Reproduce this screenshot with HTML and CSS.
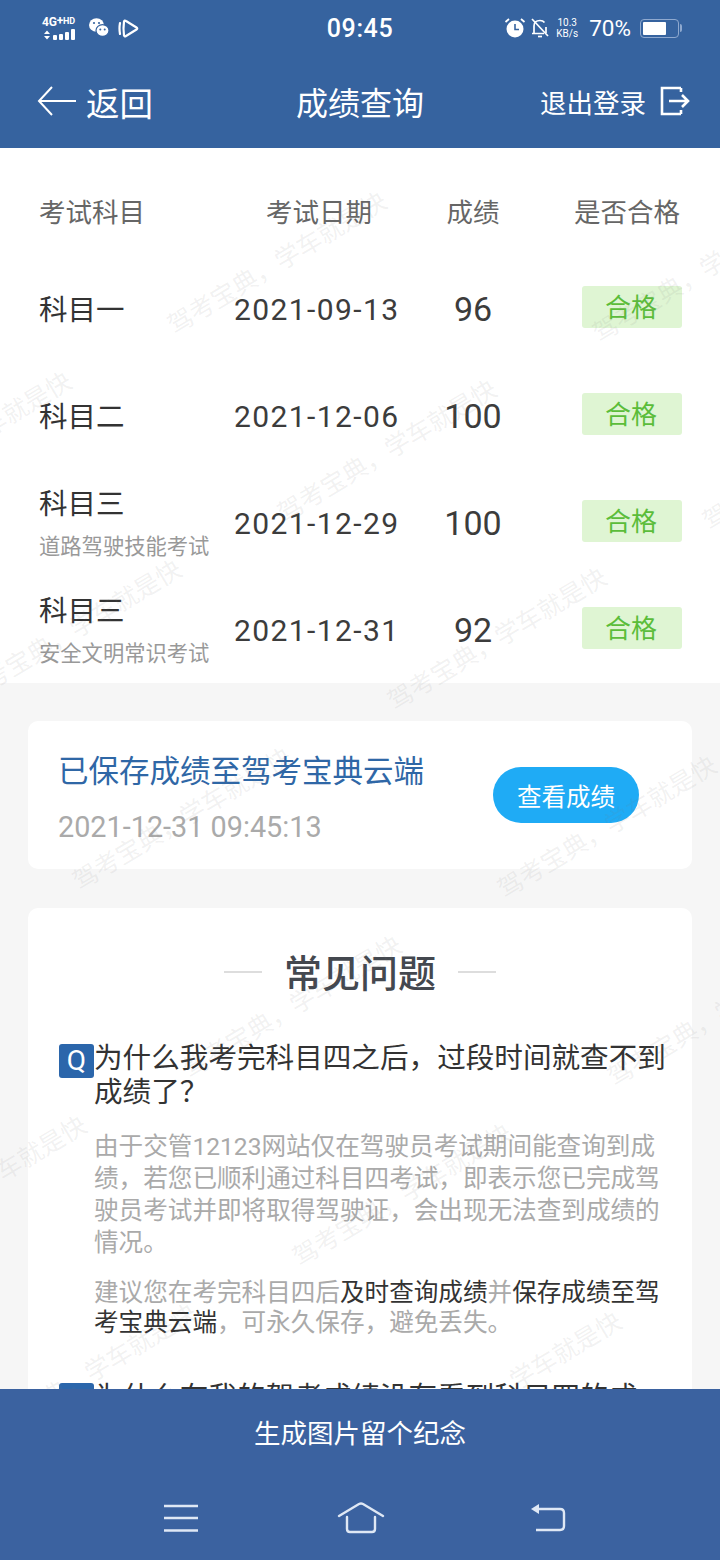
FILE: index.html
```html
<!DOCTYPE html>
<html lang="zh-CN">
<head>
    <meta charset="UTF-8">
    <meta name="viewport" content="width=device-width, initial-scale=1.0">
    <title>成绩查询</title>
    <link rel="stylesheet" href="styles.css">
</head>
<body>
    <header class="top">
        <div class="status">
            <div class="status-left">
                <div class="signal">
                    <span class="signal-text">4G<sup>+</sup><em>HD</em></span>
                    <svg width="38" height="12" viewBox="0 0 38 12">
                        <path d="M2 5 L5 1.500 L8 5 Z M2 7 L5 10.500 L8 7 Z" fill="#fff"/>
                        <rect x="11" y="6" width="4" height="5" rx="1" fill="#fff"/>
                        <rect x="17" y="5" width="4" height="6" rx="1" fill="#fff"/>
                        <rect x="23" y="3" width="4" height="8" rx="1" fill="#fff"/>
                        <rect x="29" y="0" width="4" height="11" rx="1" fill="#fff"/>
                    </svg>
                </div>
                <svg class="wechat" width="22" height="22" viewBox="0 0 22 22">
                    <ellipse cx="8.500" cy="8" rx="7.500" ry="6.800" fill="#fff"/>
                    <ellipse cx="14.500" cy="13.500" rx="6.500" ry="5.800" fill="#fff" stroke="#36639f" stroke-width="1.200"/>
                    <circle cx="6" cy="6" r="1.100" fill="#36639f"/>
                    <circle cx="11" cy="6" r="1.100" fill="#36639f"/>
                    <circle cx="12.300" cy="12.500" r="1" fill="#36639f"/>
                    <circle cx="16.700" cy="12.500" r="1" fill="#36639f"/>
                </svg>
                <svg class="play" width="21" height="21" viewBox="0 0 21 21" fill="none" stroke="#fff" stroke-width="2.200" stroke-linejoin="round" stroke-linecap="round">
                    <path d="M2 5 Q1 10.500 2 16"/>
                    <path d="M6 3.500 Q6.500 2 8 3 L18.500 9.500 Q20 10.500 18.500 11.500 L8 18 Q6.500 19 6 17.500 Q5 10.500 6 3.500 Z"/>
                </svg>
            </div>
            <div class="time">09:45</div>
            <div class="status-right">
                <svg width="22" height="22" viewBox="0 0 22 22">
                    <circle cx="11" cy="12" r="8.500" fill="#fff"/>
                    <path d="M11 7 V12.500 H15" fill="none" stroke="#36639f" stroke-width="1.600"/>
                    <path d="M1.500 5 L5 2 M20.500 5 L17 2" stroke="#fff" stroke-width="1.800"/>
                </svg>
                <svg width="20" height="22" viewBox="0 0 20 22" fill="none" stroke="#fff" stroke-width="1.700">
                    <path d="M4 16 V9 Q4 3.500 10 3.500 Q13 3.500 14.500 5.500 M16 10 V16 M2 16.500 H14"/>
                    <path d="M2 2 L18 19"/>
                    <path d="M8 19.500 H12"/>
                </svg>
                <div class="speed">10.3<br>KB/s</div>
                <span class="battery-text">70%</span>
                <div class="battery"><div class="battery-fill"></div></div>
            </div>
        </div>
        <nav class="nav">
            <a class="back">
                <svg width="40" height="32" viewBox="0 0 40 32" fill="none" stroke="#fff" stroke-width="2">
                    <path d="M39 16 H2 M15 2 L2 16 L15 30"/>
                </svg>
                <span>返回</span>
            </a>
            <h1>成绩查询</h1>
            <a class="logout">
                <span>退出登录</span>
                <svg width="32" height="30" viewBox="0 0 32 30" fill="none" stroke="#fff" stroke-width="2.600">
                    <path d="M22 2 H3 V28 H22 M22 28 V24 M22 2 V6"/>
                    <path d="M10 15 H29 M23 9 L29 15 L23 21"/>
                </svg>
            </a>
        </nav>
    </header>

    <main class="content">
        <section class="scores">
            <div class="row head">
                <div>考试科目</div>
                <div class="center">考试日期</div>
                <div class="center">成绩</div>
                <div class="right">是否合格</div>
            </div>
            <div class="row">
                <div class="subject">科目一</div>
                <div class="date">2021-09-13</div>
                <div class="score">96</div>
                <div class="right"><span class="pass">合格</span></div>
            </div>
            <div class="row">
                <div class="subject">科目二</div>
                <div class="date">2021-12-06</div>
                <div class="score">100</div>
                <div class="right"><span class="pass">合格</span></div>
            </div>
            <div class="row">
                <div class="subject">科目三<small>道路驾驶技能考试</small></div>
                <div class="date">2021-12-29</div>
                <div class="score">100</div>
                <div class="right"><span class="pass">合格</span></div>
            </div>
            <div class="row">
                <div class="subject">科目三<small>安全文明常识考试</small></div>
                <div class="date">2021-12-31</div>
                <div class="score">92</div>
                <div class="right"><span class="pass">合格</span></div>
            </div>
        </section>

        <section class="card saved">
            <div>
                <h2>已保存成绩至驾考宝典云端</h2>
                <p>2021-12-31 09:45:13</p>
            </div>
            <button class="view-btn">查看成绩</button>
        </section>

        <section class="card faq">
            <div class="faq-title"><i></i><h2>常见问题</h2><i></i></div>
            <div class="question">
                <span class="q-mark">Q</span>
                <h3>为什么我考完科目四之后，过段时间就查不到<br>成绩了？</h3>
            </div>
            <p class="answer">由于交管12123网站仅在驾驶员考试期间能查询到成<br>绩，若您已顺利通过科目四考试，即表示您已完成驾<br>驶员考试并即将取得驾驶证，会出现无法查到成绩的<br>情况。</p>
            <p class="answer second">建议您在考完科目四后<b>及时查询成绩</b>并<b>保存成绩至驾<br>考宝典云端</b>，可永久保存，避免丢失。</p>
            <div class="question next">
                <span class="q-mark">Q</span>
                <h3>为什么在我的驾考成绩没有看到科目四的成<br>绩？</h3>
            </div>
        </section>

        <div class="watermarks">
            <span>驾考宝典，学车就是快</span>
            <span>驾考宝典，学车就是快</span>
            <span>驾考宝典，学车就是快</span>
            <span>驾考宝典，学车就是快</span>
            <span>驾考宝典，学车就是快</span>
            <span>驾考宝典，学车就是快</span>
            <span>驾考宝典，学车就是快</span>
            <span>驾考宝典，学车就是快</span>
            <span>驾考宝典，学车就是快</span>
            <span>驾考宝典，学车就是快</span>
            <span>驾考宝典，学车就是快</span>
            <span>驾考宝典，学车就是快</span>
            <span>驾考宝典，学车就是快</span>
            <span>驾考宝典，学车就是快</span>
            <span>驾考宝典，学车就是快</span>
        </div>
    </main>

    <footer class="bottom">
        <div class="make-img">生成图片留个纪念</div>
        <div class="sys-nav">
            <svg width="36" height="28" viewBox="0 0 36 28" fill="none" stroke="#dfe8f5" stroke-width="2.400">
                <path d="M1 2 H35 M1 14 H35 M1 26.500 H35"/>
            </svg>
            <svg class="home" width="48" height="32" viewBox="0 0 48 32" fill="none" stroke="#dfe8f5" stroke-width="2.400" stroke-linecap="round" stroke-linejoin="round">
                <path d="M2 14 L22 2 Q24 1 26 2 L46 14"/>
                <path d="M10 15 V27 Q10 30 13 30 H35 Q38 30 38 27 V15"/>
            </svg>
            <svg width="36" height="28" viewBox="0 0 36 28" fill="none" stroke="#dfe8f5" stroke-width="2.400">
                <path d="M6 5 H30 Q34 5 34 9 V22 Q34 26 30 26 H6"/>
                <path d="M9 0 V10 L1 5 Z" fill="#dfe8f5" stroke="none"/>
            </svg>
        </div>
    </footer>
</body>
</html>
```

FILE: styles.css
```css
* {
    box-sizing: border-box;
}
body {
    font-family: Roboto, "Noto Sans CJK SC", sans-serif;
    background-color: #f6f6f6;
    color: #333;
    margin: 0;
    padding: 0;
    width: 720px;
    height: 1560px;
    display: flex;
    flex-direction: column;
    overflow: hidden;
}
h1, h2, h3, p {
    margin: 0;
    font-weight: 400;
}

/* top bar */
.top {
    background-color: #36639f;
    color: #fff;
    height: 148px;
    flex: none;
}
.status {
    height: 56px;
    padding: 0 40px 0 42px;
    display: grid;
    grid-template-columns: 1fr auto 1fr;
    align-items: center;
}
.status-left {
    display: flex;
    align-items: center;
    gap: 8px;
}
.signal {
    width: 38px;
    display: flex;
    flex-direction: column;
    gap: 1px;
}
.signal-text {
    font-size: 12px;
    font-weight: 700;
    line-height: 12px;
    white-space: nowrap;
    letter-spacing: -0.2px;
}
.signal-text sup {
    font-size: 12px;
    line-height: 0;
    vertical-align: 1px;
}
.signal-text em {
    font-style: normal;
    font-size: 9px;
    vertical-align: 2px;
}
.time {
    font-size: 25px;
    font-weight: 500;
    letter-spacing: 0.6px;
    margin-left: -2px;
}
.status-right {
    display: flex;
    align-items: center;
    justify-content: flex-end;
    gap: 4px;
}
.speed {
    font-size: 10px;
    line-height: 11px;
    text-align: center;
    width: 26px;
}
.battery-text {
    font-size: 22.500px;
    margin: 0 5px 0 5px;
}
.battery {
    width: 39px;
    height: 19px;
    border: 1.500px solid #8fa9cf;
    border-radius: 4px;
    padding: 2px;
    margin-right: 1px;
    position: relative;
}
.battery::after {
    content: "";
    position: absolute;
    right: -4px;
    top: 4px;
    width: 2px;
    height: 8px;
    background-color: #8fa9cf;
    border-radius: 0 2px 2px 0;
}
.battery-fill {
    width: 70%;
    height: 100%;
    background-color: #fff;
    border-radius: 1px;
}
.nav {
    height: 92px;
    padding: 0 29px 2px 37px;
    display: grid;
    grid-template-columns: 259px auto 1fr;
    align-items: center;
}
.nav h1 {
    font-size: 32px;
}
.back {
    display: flex;
    align-items: center;
    gap: 9px;
    font-size: 33.500px;
}
.logout {
    display: flex;
    align-items: center;
    justify-content: flex-end;
    gap: 13px;
    font-size: 26.500px;
}

/* scroll area */
.content {
    flex: 1;
    position: relative;
    overflow: hidden;
}
.scores {
    background-color: #fff;
    height: 535px;
}
.row {
    height: 107px;
    padding: 0 38px 0 39px;
    display: grid;
    grid-template-columns: 195px 165px 148px 1fr;
    align-items: center;
}
.head {
    height: 107px;
    padding-top: 18px;
    font-size: 26.500px;
    color: #666;
}
.head .center:nth-child(2) {
    padding-left: 5px;
}
.head .right {
    padding-right: 2px;
}
.center {
    text-align: center;
    white-space: nowrap;
}
.right {
    text-align: right;
    white-space: nowrap;
}
.subject {
    font-size: 28.500px;
    color: #333;
    padding-bottom: 2px;
    white-space: nowrap;
}
.subject small {
    display: block;
    font-size: 21.300px;
    color: #999;
    line-height: 30px;
    margin-top: 10px;
    margin-bottom: 0;
}
.date {
    font-size: 30px;
    letter-spacing: 1.400px;
    text-align: center;
    color: #3c3c3c;
    white-space: nowrap;
    padding-top: 2px;
}
.score {
    font-size: 34px;
    text-align: center;
    color: #3c3c3c;
}
.pass {
    display: inline-block;
    width: 100px;
    height: 42px;
    line-height: 45px;
    padding-right: 2px;
    margin-bottom: 3px;
    vertical-align: top;
    text-align: center;
    font-size: 26px;
    color: #5bbd3a;
    background-color: #dff5d3;
    border-radius: 3px;
}

.card {
    background-color: #fff;
    border-radius: 10px;
    margin: 0 28px;
}
.saved {
    margin-top: 38px;
    height: 148px;
    padding: 29px 53px 0 30px;
    display: flex;
    justify-content: space-between;
}
.saved h2 {
    font-size: 30.500px;
    line-height: 44px;
    color: #2f67a6;
    white-space: nowrap;
}
.saved p {
    font-size: 28.800px;
    line-height: 34px;
    margin-top: 16px;
    color: #aaa;
}
.view-btn {
    width: 146px;
    height: 56px;
    margin-top: 17px;
    border: none;
    border-radius: 28px;
    background-color: #1fabf5;
    color: #fff;
    font-family: inherit;
    font-size: 24.500px;
    padding: 0;
}
.faq {
    margin-top: 39px;
    height: 600px;
    padding: 36px 24px 0 31px;
}
.faq-title {
    display: flex;
    justify-content: center;
    align-items: center;
    gap: 22px;
    height: 52px;
    margin-left: -7px;
}
.faq-title i {
    width: 38px;
    height: 2px;
    margin-top: 4px;
    background-color: #ddd;
}
.faq-title h2 {
    font-size: 38px;
    font-weight: 500;
    color: #44484f;
}
.question {
    display: flex;
    align-items: flex-start;
    margin-top: 45px;
}
.q-mark {
    flex: none;
    width: 35px;
    height: 34px;
    margin-top: 3px;
    background-color: #2b66ab;
    border-radius: 3px;
    color: #fff;
    font-size: 28px;
    line-height: 34px;
    text-align: center;
}
.question h3 {
    font-size: 28.600px;
    line-height: 34px;
    color: #333;
    white-space: nowrap;
}
.answer {
    margin: 22px 0 0 35px;
    font-size: 24.600px;
    line-height: 32px;
    color: #aaa;
    white-space: nowrap;
}
.answer b {
    font-weight: 400;
    color: #333;
}
.answer.second {
    margin-top: 19px;
    line-height: 30px;
}
.question.next {
    margin-top: 42px;
}

/* watermark layer over the content */
.watermarks {
    position: absolute;
    inset: 5px 0 0 0;
    pointer-events: none;
}
.watermarks span {
    position: absolute;
    font-size: 25px;
    line-height: 30px;
    color: rgba(120, 120, 120, 0.10);
    white-space: nowrap;
    transform-origin: 0 100%;
    transform: rotate(-31deg);
}
.watermarks span:nth-child(1) { left: 178px; top: 158px; }
.watermarks span:nth-child(2) { left: 288px; top: 346px; }
.watermarks span:nth-child(3) { left: 398px; top: 534px; }
.watermarks span:nth-child(4) { left: 508px; top: 722px; }
.watermarks span:nth-child(5) { left: 618px; top: 910px; }
.watermarks span:nth-child(6) { left: -137px; top: 338px; }
.watermarks span:nth-child(7) { left: -27px; top: 526px; }
.watermarks span:nth-child(8) { left: 83px; top: 714px; }
.watermarks span:nth-child(9) { left: 193px; top: 902px; }
.watermarks span:nth-child(10) { left: 303px; top: 1090px; }
.watermarks span:nth-child(11) { left: 413px; top: 1278px; }
.watermarks span:nth-child(12) { left: -122px; top: 1082px; }
.watermarks span:nth-child(13) { left: 603px; top: 166px; }
.watermarks span:nth-child(14) { left: 713px; top: 354px; }
.watermarks span:nth-child(15) { left: -12px; top: 1270px; }

/* bottom bar */
.bottom {
    background-color: #3b62a0;
    color: #fff;
    height: 171px;
    flex: none;
}
.make-img {
    height: 90px;
    font-size: 26.500px;
    line-height: 90px;
    text-align: center;
}
.sys-nav {
    padding: 23px 154px 0 163px;
    display: flex;
    justify-content: space-between;
    align-items: center;
}
.home {
    margin-right: 8px;
}
```
